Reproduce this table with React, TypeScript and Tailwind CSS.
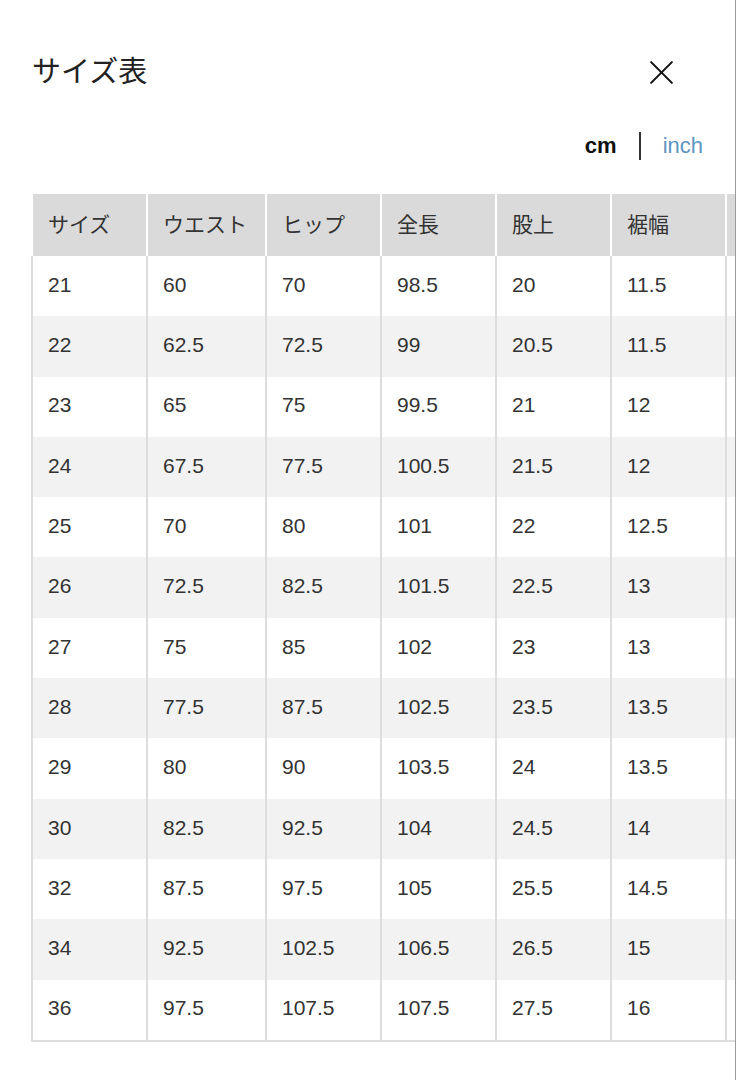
import React from "react";

const HEADERS = ["サイズ", "ウエスト", "ヒップ", "全長", "股上", "裾幅", ""];
const WIDTHS = ["w-[115px]", "w-[119px]", "w-[115px]", "w-[115px]", "w-[115px]", "w-[115px]", "w-[115px]"];

const ROWS: string[][] = [
  ["21", "60", "70", "98.5", "20", "11.5", ""],
  ["22", "62.5", "72.5", "99", "20.5", "11.5", ""],
  ["23", "65", "75", "99.5", "21", "12", ""],
  ["24", "67.5", "77.5", "100.5", "21.5", "12", ""],
  ["25", "70", "80", "101", "22", "12.5", ""],
  ["26", "72.5", "82.5", "101.5", "22.5", "13", ""],
  ["27", "75", "85", "102", "23", "13", ""],
  ["28", "77.5", "87.5", "102.5", "23.5", "13.5", ""],
  ["29", "80", "90", "103.5", "24", "13.5", ""],
  ["30", "82.5", "92.5", "104", "24.5", "14", ""],
  ["32", "87.5", "97.5", "105", "25.5", "14.5", ""],
  ["34", "92.5", "102.5", "106.5", "26.5", "15", ""],
  ["36", "97.5", "107.5", "107.5", "27.5", "16", ""],
];

const FONT = "font-['Liberation_Sans','Noto_Sans_CJK_JP',sans-serif]";

export default function App() {
  return (
    <div className={`h-[1080px] w-[736px] overflow-hidden border-r border-[#9a9a9a] bg-white text-[#333] ${FONT}`}>
      <div className="flex items-center justify-between pl-8 pr-[60px] pt-[52px]">
        <h1 className="m-0 text-[29px] font-normal leading-[40px] text-[#222]">サイズ表</h1>
        <button aria-label="close" className="flex h-[28px] w-[28px] items-center justify-center">
          <svg width="27" height="27" viewBox="0 0 26 26" fill="none" stroke="#111" strokeWidth="2" strokeLinecap="round">
            <path d="M3 3L23 23M23 3L3 23" />
          </svg>
        </button>
      </div>

      <div className="mt-[40px] flex items-center justify-end gap-[22px] pr-8 text-[22px] leading-none">
        <span className="font-bold text-[#111]">cm</span>
        <span className="h-[28px] w-[2px] bg-[#333]" />
        <span className="text-[#5d95c0]">inch</span>
      </div>

      <div className="ml-[31px] mt-[34px] w-[820px] border-b-2 border-[#dddddd]">
        <div className="flex h-[62px] bg-[#dadada]">
          {HEADERS.map((h, i) => (
            <div
              key={i}
              className={`${WIDTHS[i]} flex shrink-0 items-center border-l-2 border-white pl-[15px] text-[21px] ${i === 0 ? "border-[#dddddd]" : ""}`}
            >
              {h}
            </div>
          ))}
        </div>
        {ROWS.map((row, r) => (
          <div key={row[0]} className={`flex h-[60.3px] ${r % 2 === 1 ? "bg-[#f2f2f2]" : "bg-white"}`}>
            {row.map((cell, i) => (
              <div
                key={i}
                className={`${WIDTHS[i]} flex shrink-0 items-center border-l-2 border-[#dddddd] pb-[3px] pl-[15px] text-[21px] text-[#333]`}
              >
                {cell}
              </div>
            ))}
          </div>
        ))}
      </div>
    </div>
  );
}
